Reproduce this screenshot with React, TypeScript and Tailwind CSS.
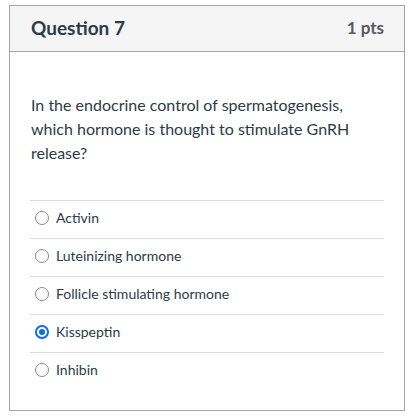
const answers = [
  { id: 'a1', label: 'Activin' },
  { id: 'a2', label: 'Luteinizing hormone' },
  { id: 'a3', label: 'Follicle stimulating hormone' },
  { id: 'a4', label: 'Kisspeptin', checked: true },
  { id: 'a5', label: 'Inhibin' },
];

function Radio({ checked }: { checked?: boolean }) {
  if (checked) {
    return (
      <span className="w-[14px] h-[14px] rounded-full border-[2px] border-[#0b6fde] flex items-center justify-center shrink-0">
        <span className="w-[6px] h-[6px] rounded-full bg-[#0b6fde]" />
      </span>
    );
  }
  return <span className="w-[14px] h-[14px] rounded-full border-[1.5px] border-[#888888] bg-white shrink-0" />;
}

export default function App() {
  return (
    <div className="w-[410px] h-[419px] bg-white pt-[5px] pl-[9px]" style={{ fontFamily: 'Lato, "Open Sans", sans-serif' }}>
      <div className="w-[396px] h-[406px] border border-[#a5a5a5] flex flex-col">
        <div className="h-[46px] bg-[#f5f5f5] border-b border-[#a5a5a5] flex items-center justify-between pl-[21px] pr-[20px] pb-px">
          <span className="text-[19px] font-bold text-[#2d3b45]">Question 7</span>
          <span className="text-[17px] font-bold text-[#555a5e]">1 pts</span>
        </div>
        <div className="px-[20px] pt-[41px]">
          <p className="text-[16px] leading-[24px] text-[#2d3b45] pl-px">
            In the endocrine control of spermatogenesis, which hormone is thought to stimulate GnRH release?
          </p>
          <div className="mt-[35px]">
            {answers.map((a) => (
              <div key={a.id} className="h-[38px] border-t border-[#dcdcdc] flex items-center gap-[7px] pl-[5px] pb-[4px]">
                <Radio checked={a.checked} />
                <span className="text-[14px] text-[#2d3b45]">{a.label}</span>
              </div>
            ))}
          </div>
        </div>
      </div>
    </div>
  );
}
